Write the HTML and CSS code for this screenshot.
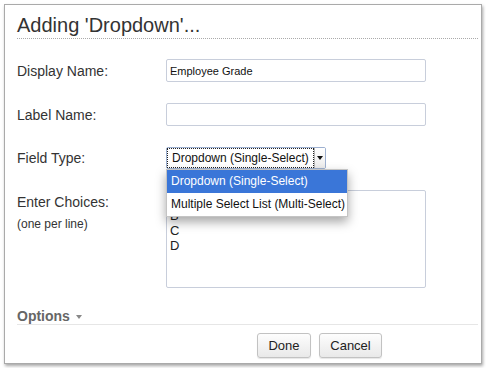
FILE: index.html
```html
<!DOCTYPE html>
<html lang="en">
<head>
    <meta charset="UTF-8">
    <meta name="viewport" content="width=device-width, initial-scale=1.0">
    <title>Adding 'Dropdown'...</title>
    <link rel="stylesheet" href="styles.css">
</head>
<body>
    <div class="dialog">
        <h1 class="dialog-title">Adding 'Dropdown'...</h1>

        <div class="form-row">
            <label class="form-label">Display Name:</label>
            <input type="text" class="text-input" value="Employee Grade">
        </div>

        <div class="form-row">
            <label class="form-label">Label Name:</label>
            <input type="text" class="text-input">
        </div>

        <div class="form-row">
            <label class="form-label">Field Type:</label>
            <div class="select">
                <span class="select-value">Dropdown (Single-Select)</span>
                <span class="select-arrow"></span>
                <div class="select-menu">
                    <div class="select-option selected">Dropdown (Single-Select)</div>
                    <div class="select-option">Multiple Select List (Multi-Select)</div>
                </div>
            </div>
        </div>

        <div class="form-row top">
            <div class="form-label">
                <div class="choices-label">Enter Choices:</div>
                <div class="choices-hint">(one per line)</div>
            </div>
            <textarea class="choices">A
B
C
D</textarea>
        </div>

        <div class="options">Options <span class="caret"></span></div>

        <div class="dialog-actions">
            <button class="btn btn-done">Done</button>
            <button class="btn btn-cancel">Cancel</button>
        </div>
    </div>
</body>
</html>
```

FILE: styles.css
```css
* {
    margin: 0;
    padding: 0;
    box-sizing: border-box;
    font-family: "Liberation Sans", Arial, sans-serif;
}

body {
    background: white;
    padding: 4px;
    color: #333;
}

.dialog {
    width: 478px;
    height: 360px;
    background: white;
    border: 1px solid #aaa;
    box-shadow: 1px 2px 3px rgba(0,0,0,0.35);
    padding: 8px 3px 0 12px;
}

.dialog-title {
    font-size: 20px;
    font-weight: normal;
    line-height: 24px;
    color: #333;
    padding-bottom: 1px;
    border-bottom: 1px dotted #aaa;
    margin-bottom: 20px;
}

.form-row {
    display: flex;
    align-items: center;
    margin-bottom: 21px;
}

.form-row.top {
    align-items: flex-start;
    margin-bottom: 20px;
}

.form-label {
    width: 149px;
    font-size: 14px;
    color: #333;
}

.text-input {
    width: 260px;
    height: 23px;
    border: 1px solid #c8cedb;
    border-radius: 2px;
    padding: 0 3px;
    font-size: 11px;
    color: #111;
}

.text-input:focus {
    outline: none;
}

.select {
    position: relative;
    display: flex;
    width: 160px;
    height: 22px;
    border: 1px solid #9db0d0;
    border-radius: 2px;
    background: white;
    font-size: 12px;
    color: #111;
}

.select-value {
    flex: 1;
    line-height: 18px;
    padding-left: 4px;
    border: 1px dotted #222;
}

.select-arrow {
    position: relative;
    width: 11px;
    background: linear-gradient(#fff, #ececec);
    border-left: 1px solid #b5b5b5;
}

.select-arrow::after {
    content: "";
    position: absolute;
    left: 2px;
    top: 8px;
    border-left: 3px solid transparent;
    border-right: 3px solid transparent;
    border-top: 4px solid #111;
}

.select-menu {
    position: absolute;
    top: 21px;
    left: -1px;
    width: 182px;
    background: white;
    border: 1px solid #c4c4c4;
    box-shadow: 0 5px 10px rgba(0,0,0,0.35);
    z-index: 2;
}

.select-option {
    line-height: 23px;
    padding-left: 4px;
    font-size: 12px;
    color: #111;
    white-space: nowrap;
}

.select-option.selected {
    background: #3a76d8;
    color: white;
}

.choices-label {
    margin-top: 4px;
    line-height: 17px;
}

.choices-hint {
    margin-top: 5px;
    font-size: 12px;
    line-height: 16px;
}

.choices {
    width: 260px;
    height: 98px;
    border: 1px solid #c8cedb;
    border-radius: 2px;
    padding: 2px 3px;
    font-size: 13px;
    line-height: 15px;
    color: #222;
    resize: none;
    overflow: hidden;
}

.options {
    font-size: 14px;
    font-weight: bold;
    line-height: 16px;
    color: #666;
    border-bottom: 1px solid #e6e6e6;
}

.caret {
    display: inline-block;
    vertical-align: middle;
    margin-left: 2px;
    border-left: 3px solid transparent;
    border-right: 3px solid transparent;
    border-top: 4px solid #888;
}

.dialog-actions {
    display: flex;
    gap: 8px;
    padding-left: 240px;
    margin-top: 8px;
}

.btn {
    height: 25px;
    border: 1px solid #c2c2c2;
    border-radius: 3px;
    background: linear-gradient(#fdfdfd, #e9e9e9);
    box-shadow: 0 1px 1px rgba(0,0,0,0.1);
    font-size: 13px;
    color: #222;
}

.btn-done {
    width: 54px;
}

.btn-cancel {
    width: 63px;
}
```
